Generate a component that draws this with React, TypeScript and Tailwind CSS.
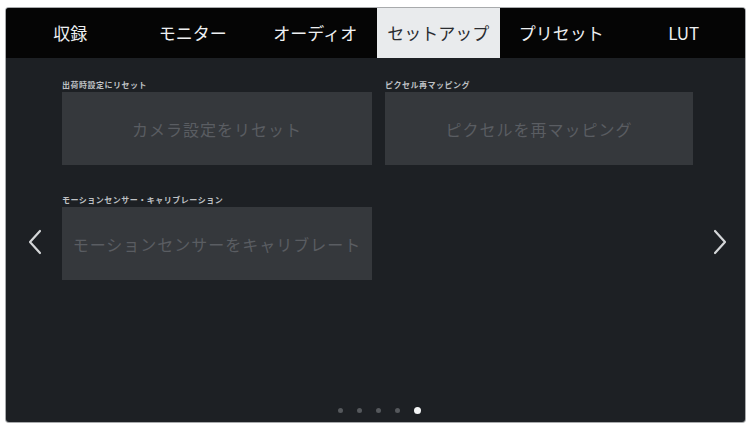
import React from "react";

const tabs = ["収録", "モニター", "オーディオ", "セットアップ", "プリセット", "LUT"];
const activeTab = 3;

function Chevron({ dir }: { dir: "left" | "right" }) {
  return (
    <svg width="16" height="28" viewBox="0 0 16 28" fill="none">
      <polyline
        points={dir === "left" ? "13,3 3,14 13,25" : "3,3 13,14 3,25"}
        stroke="#d4d6d8"
        strokeWidth="2.2"
        strokeLinecap="round"
        strokeLinejoin="round"
      />
    </svg>
  );
}

function SettingButton({ label, text }: { label: string; text: string }) {
  return (
    <div className="flex flex-col">
      <div className="h-[14px] text-[8px] font-bold leading-[14px] tracking-[0.5px] text-[#bfc1c4]">{label}</div>
      <div className="flex h-[73px] items-center justify-center bg-[#35383c] text-[16px] tracking-[1px] text-[#5a5d62]">
        {text}
      </div>
    </div>
  );
}

export default function App() {
  return (
    <div
      className="h-[426px] w-[751px] bg-white pl-[6px] pt-[8px]"
      style={{ fontFamily: '"Noto Sans CJK JP", "Noto Sans", sans-serif' }}
    >
      <div className="flex h-[414px] w-[739px] flex-col overflow-hidden rounded-[3px] bg-[#1d2024] shadow-[0_0_0_1px_#a8aaac]">
        {/* tab bar */}
        <div className="flex h-[50px] bg-[#050505] pl-[3px]">
          {tabs.map((t, i) => (
            <div
              key={t}
              className={
                i === activeTab
                  ? "flex w-[124px] items-center justify-center bg-[#e9ebed] text-[17px] text-[#2a2c30]"
                  : "flex w-[123px] items-center justify-center text-[17px] text-[#eef0f2]"
              }
            >
              {t}
            </div>
          ))}
        </div>

        {/* body */}
        <div className="relative flex flex-1 flex-col">
          <div className="grid grid-cols-[310px_308px] gap-x-[13px] gap-y-[28px] pl-[56px] pt-[20px]">
            <SettingButton label="出荷時設定にリセット" text="カメラ設定をリセット" />
            <SettingButton label="ピクセル再マッピング" text="ピクセルを再マッピング" />
            <SettingButton label="モーションセンサー・キャリブレーション" text="モーションセンサーをキャリブレート" />
          </div>

          <div className="absolute left-[21px] top-[170px]">
            <Chevron dir="left" />
          </div>
          <div className="absolute right-[17px] top-[170px]">
            <Chevron dir="right" />
          </div>

          {/* page dots */}
          <div className="absolute bottom-[8px] left-0 right-0 flex items-center justify-center gap-[14px] pl-[8px]">
            <span className="h-[5px] w-[5px] rounded-full bg-[#55585c]" />
            <span className="h-[5px] w-[5px] rounded-full bg-[#55585c]" />
            <span className="h-[5px] w-[5px] rounded-full bg-[#55585c]" />
            <span className="h-[5px] w-[5px] rounded-full bg-[#55585c]" />
            <span className="h-[7px] w-[7px] rounded-full bg-[#f4f5f6]" />
          </div>
        </div>
      </div>
    </div>
  );
}
